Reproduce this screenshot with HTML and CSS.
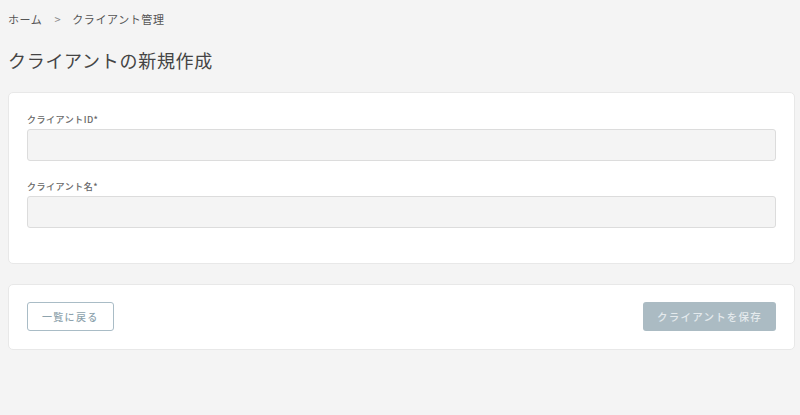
FILE: index.html
```html
<!DOCTYPE html>
<html lang="ja">
<head>
    <meta charset="UTF-8">
    <meta name="viewport" content="width=device-width, initial-scale=1.0">
    <title>クライアントの新規作成</title>
    <link rel="stylesheet" href="styles.css">
</head>
<body>
    <nav class="breadcrumb">
        <span>ホーム</span>
        <span class="sep">&gt;</span>
        <span>クライアント管理</span>
    </nav>
    <h1 class="page-title">クライアントの新規作成</h1>

    <form class="card form-card">
        <div class="field">
            <label for="client-id">クライアントID*</label>
            <input type="text" id="client-id">
        </div>
        <div class="field">
            <label for="client-name">クライアント名*</label>
            <input type="text" id="client-name">
        </div>
    </form>

    <div class="card action-card">
        <button class="back-button">一覧に戻る</button>
        <button class="save-button" disabled>クライアントを保存</button>
    </div>
</body>
</html>
```

FILE: styles.css
```css
* {
    margin: 0;
    padding: 0;
    box-sizing: border-box;
}
body {
    background-color: #f4f4f4;
    font-family: 'Noto Sans CJK JP', 'Noto Sans', sans-serif;
    padding: 8px 5px 8px 8px;
}
.breadcrumb {
    display: flex;
    align-items: center;
    font-size: 11px;
    line-height: 22px;
    color: #555;
    letter-spacing: 0.6px;
}
.breadcrumb .sep {
    margin: 0 11px 0 12px;
    color: #888;
}
.page-title {
    margin-top: 16px;
    font-size: 18px;
    line-height: 28px;
    font-weight: 400;
    color: #444;
    letter-spacing: 0.7px;
}
.card {
    background-color: #ffffff;
    border: 1px solid #e8e8e8;
    border-radius: 5px;
}
.form-card {
    margin-top: 18px;
    padding: 20px 18px 16px;
}
.field {
    margin-bottom: 19px;
}
.field label {
    display: block;
    font-size: 9px;
    line-height: 14px;
    font-weight: 500;
    color: #666;
    letter-spacing: 0.5px;
    margin-bottom: 2px;
}
.field input {
    display: block;
    width: 100%;
    height: 32px;
    background-color: #f4f4f4;
    border: 1px solid #dcdcdc;
    border-radius: 3px;
}
.action-card {
    margin-top: 20px;
    padding: 17px 18px 18px;
    display: flex;
    justify-content: space-between;
}
.back-button {
    height: 29px;
    padding: 0 14px;
    background-color: #ffffff;
    border: 1px solid #a9bcc6;
    border-radius: 3px;
    color: #8ea3ad;
    font-family: inherit;
    font-size: 10px;
    font-weight: 500;
    letter-spacing: 1.3px;
}
.save-button {
    height: 29px;
    width: 133px;
    background-color: #abbbc3;
    border: none;
    border-radius: 3px;
    color: #e4eaed;
    font-family: inherit;
    font-size: 10.5px;
    font-weight: 500;
    letter-spacing: 1.2px;
}
```
